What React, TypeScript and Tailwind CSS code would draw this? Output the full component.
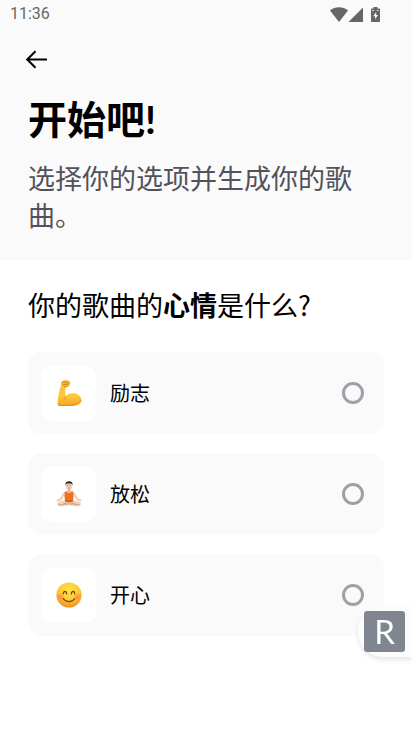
import React, { useState } from 'react';

interface MoodOption {
  id: string;
  label: string;
  icon: React.ReactNode;
}

const MuscleIcon = () => (
  <svg viewBox="0 0 26 26" className="h-[26px] w-[26px]" aria-hidden="true">
    <defs>
      <linearGradient id="arm" x1="0" y1="0" x2="0" y2="1">
        <stop offset="0" stopColor="#f8bd3c" />
        <stop offset="0.6" stopColor="#ffc936" />
        <stop offset="1" stopColor="#f0a321" />
      </linearGradient>
    </defs>
    <path
      d="M5.800 1.200C7.400.1 10.800-.2 12.800.6c1 .4 1.500 1.500 1.400 2.600-.1 1.700-.8 3-2.300 3.700l-2.400.5c-.4 2.500-.4 6.100.2 9 1.700-2.300 4.800-3.500 7.800-3.200 4.500.5 7.800 3.300 8 6.500.1 2.500-1.500 4.300-4.300 5.400-4.300 1.600-12.300 1.900-17.600 1.200-1.400-.2-2-.9-2-2.300C1.700 17.500 3.200 11 4.700 6.600c.5-1.900 0-4 1.100-5.400Z"
      fill="url(#arm)"
    />
    <path d="M6.400 2.600c1.300-.9 3.300-1 4.300-.3M11 1.600c1 .5 1.500 1.200 1.300 2.300M7 4.800l3-.8 1.700 1.300M8.200 6.900l2-.5" fill="none" stroke="#c77b17" strokeWidth="0.9" strokeLinecap="round" />
    <path d="M9.700 16.400c-.7 1-.9 2.100-.8 3.200" fill="none" stroke="#dc9120" strokeWidth="0.8" strokeLinecap="round" />
    <path d="M3.300 25.200c5.600.8 12.700.2 17.300-1.300 2.200-.8 3.700-1.800 4.400-3.100" fill="none" stroke="#da861c" strokeWidth="0.8" strokeLinecap="round" />
  </svg>
);

const LotusIcon = () => (
  <svg viewBox="0 0 26 26" className="h-[26px] w-[26px]" aria-hidden="true">
    <path d="M9.300 11.300C7 12.300 6.600 15.600 5 18l-3.500 1.500" fill="none" stroke="#efcbb2" strokeWidth="2" strokeLinecap="round" strokeLinejoin="round" />
    <path d="M16.700 11.300c2.300 1 2.700 4.300 4.300 6.700l3.500 1.500" fill="none" stroke="#efcbb2" strokeWidth="2" strokeLinecap="round" strokeLinejoin="round" />
    <path d="M9.500 19.500c-3 .2-6.800 1-8 2.500-.9 1.200-.2 2.700 1.500 3 3.500.6 7.500-.1 10-1.200 2.500 1.100 6.500 1.800 10 1.200 1.700-.3 2.400-1.800 1.500-3-1.200-1.500-5-2.300-8-2.500Z" fill="#f2cdb5" />
    <path d="M3 23.800c4 .1 7-1.200 10-2.100 3 .9 6 2.200 10 2.100M8 22.200l4 1.600M18 22.200l-4 1.600" fill="none" stroke="#c98d6d" strokeWidth="0.7" strokeLinecap="round" />
    <path d="M11.300 7.500h3.400v4.200h-3.400Z" fill="#dfb095" />
    <path d="M9 10.500h1.900c.4 1 1 1.500 2.100 1.500s1.700-.5 2.100-1.500H17l.6 4-.6 6c-2.200.6-5.800.6-8 0l-.6-6Z" fill="#ee7024" />
    <path d="M9 19c2.400.7 5.600.7 8 0v1.600c-2.200.7-5.800.7-8 0Z" fill="#d65b19" />
    <ellipse cx="13" cy="4.800" rx="3.300" ry="4.200" fill="#f3d0b9" />
    <path d="M9.400 4.500C9 1.700 10.400.2 13 .2s4 1.500 3.600 4.300l-.7-1.600c-1.500-.4-4.300-.4-5.800 0Z" fill="#2f2c30" />
    <path d="M11 4.600h1.200M13.800 4.600H15M12.200 7h1.600" stroke="#8b604d" strokeWidth="0.7" />
  </svg>
);

const SmileIcon = () => (
  <svg viewBox="0 0 26 26" className="h-[26px] w-[26px]" aria-hidden="true">
    <defs>
      <radialGradient id="face" cx="0.5" cy="0.3" r="0.72">
        <stop offset="0" stopColor="#ffe34a" />
        <stop offset="0.55" stopColor="#ffc936" />
        <stop offset="1" stopColor="#ed8b22" />
      </radialGradient>
      <radialGradient id="cheek">
        <stop offset="0" stopColor="#ff7040" stopOpacity="0.75" />
        <stop offset="1" stopColor="#ff8a3c" stopOpacity="0" />
      </radialGradient>
    </defs>
    <circle cx="13" cy="13" r="12.600" fill="url(#face)" />
    <circle cx="4.500" cy="14.800" r="4" fill="url(#cheek)" />
    <circle cx="21.500" cy="14.800" r="4" fill="url(#cheek)" />
    <path d="M7.300 11.800c.3-3.300 3-3.300 3.400 0M15.300 11.800c.4-3.300 3.100-3.300 3.400 0M7.200 16.700c2.700 3.800 8.900 3.800 11.600 0" fill="none" stroke="#7a4410" strokeWidth="1.300" strokeLinecap="round" />
  </svg>
);

const moods: MoodOption[] = [
  { id: 'motivation', label: '励志', icon: <MuscleIcon /> },
  { id: 'relax', label: '放松', icon: <LotusIcon /> },
  { id: 'happy', label: '开心', icon: <SmileIcon /> }
];

const StatusBar = () => (
  <div className="flex h-7 items-center justify-between pl-[10px] pr-8 text-[#666666]">
    <span className="font-['Roboto',sans-serif] text-[16px] leading-7">11:36</span>
    <div className="flex items-center">
      <svg viewBox="0 0 18 15" className="h-[15px] w-[18px]" fill="currentColor" aria-hidden="true">
        <path d="M0 3.500C5-.9 13-.9 18 3.500L9 15Z" />
      </svg>
      <svg viewBox="0 0 15 15" className="h-[15px] w-[15px]" fill="currentColor" aria-hidden="true">
        <path d="M15 .5V15H.5Z" />
      </svg>
      <svg viewBox="0 0 9 15" className="ml-2 h-[15px] w-[9px]" aria-hidden="true">
        <path d="M2.500 0h4v1.500H8c.6 0 1 .4 1 1V14c0 .6-.4 1-1 1H1c-.6 0-1-.4-1-1V2.500c0-.6.4-1 1-1h1.500Z" fill="currentColor" />
        <path d="M5.200 5 2.200 9.300h1.900v3L7 8H5.200ZM1.200 3.200h2v.8h-2ZM5.800 3.200h2v.8h-2Z" fill="#fafafa" />
      </svg>
    </div>
  </div>
);

const MoodCard = ({ mood, checked, onSelect }: { mood: MoodOption; checked: boolean; onSelect: () => void }) => (
  <label className="flex min-h-[82px] cursor-pointer items-center rounded-[14px] bg-[#fafafa] pl-[13px] pr-5">
    <span className="flex h-[55px] w-[55px] items-center justify-center rounded-[10px] bg-white">
      {mood.icon}
    </span>
    <span className="ml-[14px] flex-1 text-[20px] leading-7">{mood.label}</span>
    <input
      type="radio"
      name="mood"
      value={mood.id}
      checked={checked}
      onChange={onSelect}
      className="h-[22px] w-[22px] appearance-none rounded-full border-[3px] border-[#9f9fa8] checked:border-black"
    />
  </label>
);

export default function App() {
  const [selected, setSelected] = useState('');

  return (
    <div className="min-h-screen bg-white font-['Noto_Sans_CJK_SC',sans-serif] text-black">
      <header className="bg-[#fafafa] pb-[27px]">
        <StatusBar />
        <div className="px-[25px] pt-5">
          <button type="button" aria-label="返回" className="block cursor-pointer">
            <svg viewBox="0 0 24 24" className="h-6 w-6" fill="none" stroke="currentColor" strokeWidth="2" aria-hidden="true">
              <path d="M22 11.500H2.500M10.500 3.200 2.200 11.500l8.300 8.300" />
            </svg>
          </button>
        </div>
        <div className="px-7 pt-5">
          <h1 className="font-['Lato','Noto_Sans_CJK_SC',sans-serif] text-[39px] font-bold leading-[54px]">开始吧!</h1>
          <p className="mt-[13px] text-[27px] leading-[37px] text-[#52525b]">选择你的选项并生成你的歌曲。</p>
        </div>
      </header>

      <main className="px-7 pt-[25px]">
        <fieldset>
          <legend className="text-[27px] leading-10">
            你的歌曲的<b className="font-bold">心情</b>是什么?
          </legend>
          <div className="mt-[27px] flex flex-col gap-[19px]">
            {moods.map((mood) => (
              <MoodCard
                key={mood.id}
                mood={mood}
                checked={selected === mood.id}
                onSelect={() => setSelected(mood.id)}
              />
            ))}
          </div>
        </fieldset>
      </main>

      {/* Floating badge */}
      <div className="fixed right-0 top-[606px] rounded-l-[26px] bg-[#fcfcfc]/90 py-[5px] pl-[6px] pr-[7px] shadow-[0_3px_5px_rgba(0,0,0,0.1)]">
        <button
          type="button"
          className="flex h-[41px] w-[41px] cursor-pointer items-center justify-center rounded-[3px] bg-[#80868f] font-['Lato',sans-serif] text-[33px] leading-none text-white"
        >
          R
        </button>
      </div>
    </div>
  );
}
